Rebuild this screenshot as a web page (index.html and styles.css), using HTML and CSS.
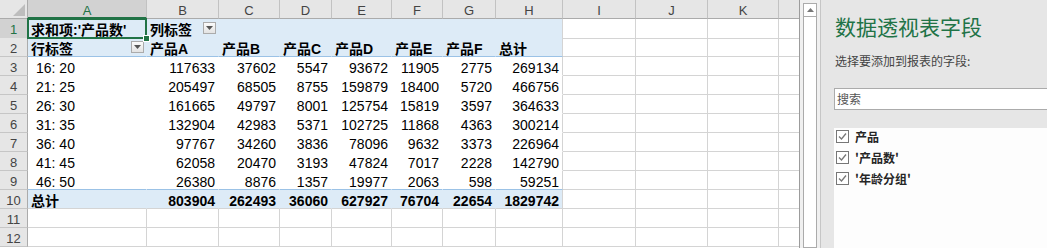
FILE: index.html
```html
<!DOCTYPE html>
<html lang="zh-CN">
<head>
  <meta charset="UTF-8" />
  <title>数据透视表</title>
  <link rel="stylesheet" href="styles.css">
</head>
<body>
  <div class="ventana">
    <!-- hoja de cálculo -->
    <div class="hoja">
      <div class="fila cab">
        <div class="esquina"><svg width="12" height="12" viewBox="0 0 12 12"><path d="M12 0V12H0z" fill="#bdbdbd"/></svg></div>
        <div class="sel">A</div><div>B</div><div>C</div><div>D</div><div>E</div><div>F</div><div>G</div><div>H</div><div>I</div><div>J</div><div>K</div><div class="ult"></div>
      </div>

      <div class="fila">
        <div class="rh rh-sel">1</div>
        <div class="p azul bold activa">求和项:'产品数'</div>
        <div class="p azul bold">列标签<span class="flecha"><svg width="7" height="4" viewBox="0 0 7 4"><path d="M0 0H7L3.5 4z" fill="#555"/></svg></span></div>
        <div class="p azul"></div><div class="p azul"></div><div class="p azul"></div><div class="p azul"></div><div class="p azul"></div><div class="p azul h"></div>
        <div></div><div></div><div></div><div class="ult"></div>
      </div>

      <div class="fila">
        <div class="rh">2</div>
        <div class="p azul bold linea">行标签<span class="flecha"><svg width="7" height="4" viewBox="0 0 7 4"><path d="M0 0H7L3.5 4z" fill="#555"/></svg></span></div>
        <div class="p azul bold linea">产品A</div><div class="p azul bold linea">产品B</div><div class="p azul bold linea">产品C</div><div class="p azul bold linea">产品D</div><div class="p azul bold linea">产品E</div><div class="p azul bold linea">产品F</div><div class="p azul bold linea h">总计</div>
        <div></div><div></div><div></div><div class="ult"></div>
      </div>

      <div class="fila">
        <div class="rh">3</div>
        <div class="p etiqueta">16: 20</div>
        <div class="p num">117633</div><div class="p num">37602</div><div class="p num">5547</div><div class="p num">93672</div><div class="p num">11905</div><div class="p num">2775</div><div class="p num h">269134</div>
        <div></div><div></div><div></div><div class="ult"></div>
      </div>

      <div class="fila">
        <div class="rh">4</div>
        <div class="p etiqueta">21: 25</div>
        <div class="p num">205497</div><div class="p num">68505</div><div class="p num">8755</div><div class="p num">159879</div><div class="p num">18400</div><div class="p num">5720</div><div class="p num h">466756</div>
        <div></div><div></div><div></div><div class="ult"></div>
      </div>

      <div class="fila">
        <div class="rh">5</div>
        <div class="p etiqueta">26: 30</div>
        <div class="p num">161665</div><div class="p num">49797</div><div class="p num">8001</div><div class="p num">125754</div><div class="p num">15819</div><div class="p num">3597</div><div class="p num h">364633</div>
        <div></div><div></div><div></div><div class="ult"></div>
      </div>

      <div class="fila">
        <div class="rh">6</div>
        <div class="p etiqueta">31: 35</div>
        <div class="p num">132904</div><div class="p num">42983</div><div class="p num">5371</div><div class="p num">102725</div><div class="p num">11868</div><div class="p num">4363</div><div class="p num h">300214</div>
        <div></div><div></div><div></div><div class="ult"></div>
      </div>

      <div class="fila">
        <div class="rh">7</div>
        <div class="p etiqueta">36: 40</div>
        <div class="p num">97767</div><div class="p num">34260</div><div class="p num">3836</div><div class="p num">78096</div><div class="p num">9632</div><div class="p num">3373</div><div class="p num h">226964</div>
        <div></div><div></div><div></div><div class="ult"></div>
      </div>

      <div class="fila">
        <div class="rh">8</div>
        <div class="p etiqueta">41: 45</div>
        <div class="p num">62058</div><div class="p num">20470</div><div class="p num">3193</div><div class="p num">47824</div><div class="p num">7017</div><div class="p num">2228</div><div class="p num h">142790</div>
        <div></div><div></div><div></div><div class="ult"></div>
      </div>

      <div class="fila">
        <div class="rh">9</div>
        <div class="p etiqueta linea">46: 50</div>
        <div class="p num linea">26380</div><div class="p num linea">8876</div><div class="p num linea">1357</div><div class="p num linea">19977</div><div class="p num linea">2063</div><div class="p num linea">598</div><div class="p num linea h">59251</div>
        <div></div><div></div><div></div><div class="ult"></div>
      </div>

      <div class="fila">
        <div class="rh">10</div>
        <div class="p azul bold total">总计</div>
        <div class="p azul bold total num">803904</div><div class="p azul bold total num">262493</div><div class="p azul bold total num">36060</div><div class="p azul bold total num">627927</div><div class="p azul bold total num">76704</div><div class="p azul bold total num">22654</div><div class="p azul bold total num h">1829742</div>
        <div></div><div></div><div></div><div class="ult"></div>
      </div>

      <div class="fila">
        <div class="rh">11</div>
        <div></div><div></div><div></div><div></div><div></div><div></div><div></div><div></div><div></div><div></div><div></div><div class="ult"></div>
      </div>

      <div class="fila">
        <div class="rh">12</div>
        <div></div><div></div><div></div><div></div><div></div><div></div><div></div><div></div><div></div><div></div><div></div><div class="ult"></div>
      </div>
    </div>

    <!-- barra de desplazamiento -->
    <div class="barra">
      <div class="barra-btn"><svg width="7" height="4" viewBox="0 0 7 4"><path d="M0 4H7L3.5 0z" fill="#777"/></svg></div>
      <div class="barra-pulgar"></div>
    </div>

    <!-- panel de campos -->
    <div class="panel">
      <h2>数据透视表字段</h2>
      <p class="sub">选择要添加到报表的字段:</p>
      <div class="buscar">搜索</div>
      <div class="campos">
        <div class="campo"><span class="check"><svg width="11" height="11" viewBox="0 0 11 11"><path d="M2 5.5L4.5 8L9 2.5" fill="none" stroke="#777" stroke-width="1.3"/></svg></span>产品</div>
        <div class="campo"><span class="check"><svg width="11" height="11" viewBox="0 0 11 11"><path d="M2 5.5L4.5 8L9 2.5" fill="none" stroke="#777" stroke-width="1.3"/></svg></span>'产品数'</div>
        <div class="campo"><span class="check"><svg width="11" height="11" viewBox="0 0 11 11"><path d="M2 5.5L4.5 8L9 2.5" fill="none" stroke="#777" stroke-width="1.3"/></svg></span>'年龄分组'</div>
      </div>
    </div>
  </div>
</body>
</html>
```

FILE: styles.css
```css
body {
  margin: 0;
  padding: 0;
  font-family: "Liberation Sans", "Noto Sans CJK SC", sans-serif;
  background-color: #fff;
  overflow: hidden;
}

.ventana {
  display: flex;
  height: 248px;
}

/* hoja */
.hoja {
  width: 799px;
  flex: none;
}

.fila {
  display: grid;
  grid-template-columns: 28px 119px 72px 61px 52px 60px 51px 53px 67px 73px 72px 71px 20px;
  height: 19px;
}

.fila > div {
  box-sizing: border-box;
  display: flex;
  align-items: flex-start;
  padding: 3px 3px 0 3px;
  border-right: 1px solid #d4d4d4;
  border-bottom: 1px solid #d4d4d4;
  font-size: 14px;
  line-height: 16px;
  color: #000;
  white-space: nowrap;
  overflow: hidden;
}

.fila > .ult {
  border-right: none;
}

.cab > div {
  justify-content: center;
  background-color: #e6e6e6;
  border-right-color: #c2c2c2;
  border-bottom-color: #ababab;
  font-size: 13px;
  color: #444;
}

.cab > .sel {
  background-color: #d2d2d2;
  color: #217346;
  border-bottom: 2px solid #217346;
}

.cab > .esquina {
  padding: 0 2px 2px 0;
  justify-content: flex-end;
  align-items: flex-end;
  border-right-color: #ababab;
}

.fila > .rh {
  justify-content: center;
  background-color: #e6e6e6;
  border-right-color: #ababab;
  border-bottom-color: #c6c6c6;
  font-size: 13px;
  color: #444;
  padding: 3px 0 0 0;
}

.fila > .rh-sel {
  background-color: #d2d2d2;
  color: #217346;
}

/* tabla dinámica */
.fila > .p {
  border-color: transparent;
}

.fila > .h {
  border-right-color: #d4d4d4;
}

.fila > .azul {
  background-color: #ddebf7;
}

.fila > .linea {
  border-bottom-color: #9bc2e6;
}

.fila > .total {
  border-bottom-color: #d4d4d4;
}

.bold {
  font-weight: bold;
}

.fila > .num {
  justify-content: flex-end;
}

.fila > .etiqueta {
  padding-left: 8px;
}

.flecha {
  margin-left: auto;
  margin-top: 0;
  margin-right: -1px;
  width: 13px;
  height: 12px;
  box-sizing: border-box;
  border: 1px solid #ababab;
  background: linear-gradient(#fbfbfb, #e3e3e3);
  display: flex;
  align-items: center;
  justify-content: center;
}

.fila > .activa {
  position: relative;
  overflow: visible;
}

.activa::before {
  content: "";
  position: absolute;
  left: -1px;
  top: -1px;
  right: -1px;
  bottom: -1px;
  border: 2px solid #217346;
}

.activa::after {
  content: "";
  position: absolute;
  right: -4px;
  bottom: -4px;
  width: 5px;
  height: 5px;
  background-color: #217346;
  border: 1px solid #fff;
}

/* barra */
.barra {
  width: 22px;
  flex: none;
  box-sizing: border-box;
  border-left: 1px solid #9c9c9c;
  border-right: 1px solid #c6c6c6;
  background-color: #f0f0f0;
  padding: 3px 3px 0 3px;
  display: flex;
  flex-direction: column;
}

.barra-btn {
  height: 14px;
  box-sizing: border-box;
  border: 1px solid #ababab;
  background-color: #fff;
  display: flex;
  align-items: center;
  justify-content: center;
}

.barra-pulgar {
  flex: 1;
  border: 1px solid #ababab;
  border-top: none;
  background-color: #fff;
}

/* panel */
.panel {
  flex: 1;
  background-color: #e6e6e6;
  padding: 12px 0 0 14px;
  overflow: hidden;
  font-family: "Noto Sans CJK SC", sans-serif;
}

.panel h2 {
  margin: 0;
  font-size: 21px;
  line-height: 28px;
  font-weight: normal;
  color: #217346;
  white-space: nowrap;
}

.sub {
  margin: 13px 0 0 0;
  font-size: 12px;
  line-height: 16px;
  color: #444;
  white-space: nowrap;
}

.buscar {
  margin: 19px 0 0 -1px;
  width: 240px;
  height: 22px;
  box-sizing: border-box;
  border: 1px solid #ababab;
  background-color: #fff;
  padding-left: 2px;
  font-size: 12px;
  line-height: 20px;
  color: #555;
}

.campos {
  margin: 18px 0 0 -1px;
  width: 240px;
  height: 130px;
  background-color: #fdfdfd;
}

.campo {
  display: flex;
  align-items: flex-start;
  height: 21px;
  font-size: 12px;
  line-height: 17px;
  font-weight: bold;
  color: #262626;
}

.check {
  width: 13px;
  height: 13px;
  box-sizing: border-box;
  border: 1px solid #777;
  background-color: #fff;
  margin: 2px 6px 0 2px;
  display: flex;
  align-items: center;
  justify-content: center;
}
```
